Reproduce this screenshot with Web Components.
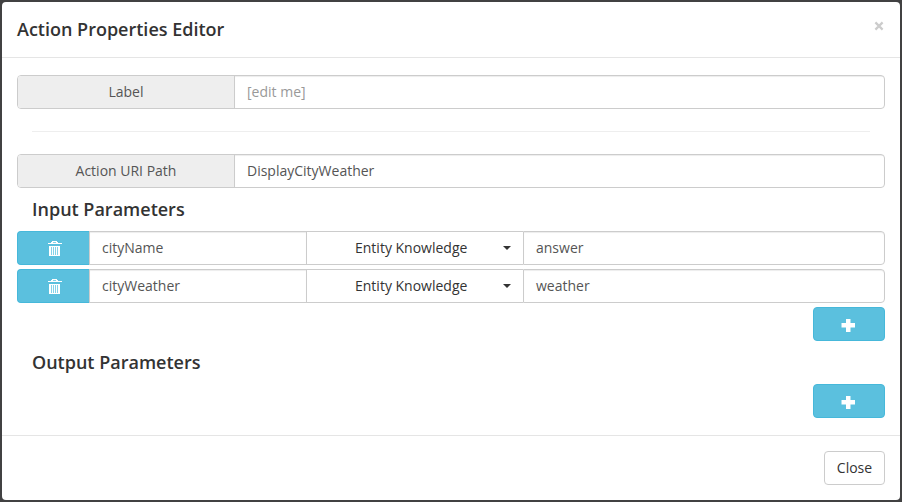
<!DOCTYPE html>
<html lang="en">
<head>
<meta charset="utf-8">
<title>Action Properties Editor</title>
<style>
html, body { margin: 0; height: 100%; }
body { box-sizing: border-box; padding: 2px; background: #414142; overflow: hidden; font: 14px/20px "Open Sans", "Noto Sans", sans-serif; color: #333; }
</style>
</head>
<body>
<modal-dialog heading="Action Properties Editor">
  <field-row label="Label" placeholder="[edit me]"></field-row>
  <rule-line></rule-line>
  <field-row label="Action URI Path" value="DisplayCityWeather"></field-row>
  <section-title>Input Parameters</section-title>
  <param-row name="cityName" kind="Entity Knowledge" value="answer"></param-row>
  <param-row name="cityWeather" kind="Entity Knowledge" value="weather"></param-row>
  <add-button></add-button>
  <section-title>Output Parameters</section-title>
  <add-button></add-button>
  <close-button slot="footer">Close</close-button>
</modal-dialog>
<script>
const define = (tag, render) => customElements.define(tag, class extends HTMLElement {
  connectedCallback() {
    if (this.shadowRoot) return;
    const t = document.createElement('template');
    t.innerHTML = '<style>*{box-sizing:border-box}:host{box-sizing:border-box}</style>' + render(this);
    this.attachShadow({ mode: 'open' }).append(t.content.cloneNode(true));
  }
});
const at = (el, n) => el.getAttribute(n) || '';

define('modal-dialog', el => `<style>
:host{display:flex;flex-direction:column;height:498px;background:#fff;border-radius:4px;overflow:hidden}
header{display:flex;justify-content:space-between;height:56px;padding:15px;border-bottom:1px solid #e5e5e5}
h4{margin:0;font-size:18px;line-height:25px;font-weight:600;color:#333}
.x{width:12px;height:17px;display:flex;align-items:center;justify-content:center}
main{display:flex;flex-direction:column;height:377px;padding:17px 15px 0}
footer{display:flex;justify-content:flex-end;height:65px;padding:15px;border-top:1px solid #e5e5e5}
</style>
<header><h4>${at(el, 'heading')}</h4><span class="x"><svg width="10" height="10" viewBox="0 0 10 10"><path d="M1.4 1.4 8.6 8.6M8.6 1.4 1.4 8.6" stroke="#ccc" stroke-width="2.2"/></svg></span></header>
<main><slot></slot></main><footer><slot name="footer"></slot></footer>`);

define('field-row', el => `<style>
:host{display:flex;height:34px;flex:none;border:1px solid #ccc;border-radius:4px;overflow:hidden}
.l{width:217px;background:#eee;border-right:1px solid #ccc;text-align:center;color:#555;line-height:32px}
.v{flex:1;padding:0 12px;line-height:32px;color:#555;box-shadow:inset 0 1px 1px rgba(0,0,0,.075)}
.p{color:#999}
</style><span class="l">${at(el, 'label')}</span><span class="v${at(el, 'value') ? '' : ' p'}">${at(el, 'value') || at(el, 'placeholder')}</span>`);

define('rule-line', () => `<style>:host{display:block;flex:none;height:1px;background:#eee;margin:22px 15px}</style>`);

define('section-title', () => `<style>
:host{display:block;flex:none;height:43px;padding:9px 15px 0;font-size:18px;line-height:25px;font-weight:600;color:#333}
</style><slot></slot>`);

define('param-row', el => `<style>
:host{display:flex;flex:none;height:34px;margin-bottom:4px;line-height:32px;color:#555}
.b{width:72px;background:#5bc0de;border:1px solid #46b8da;border-right:0;border-radius:4px 0 0 4px;display:flex;align-items:center;justify-content:center;padding:2px 0 0 2px}
.f{border:1px solid #ccc;padding:0 12px;box-shadow:inset 0 1px 1px rgba(0,0,0,.075)}
.n{width:217px;border-right:0}
.k{width:217px;border:1px solid #ccc;border-right:0;color:#333;display:flex;align-items:center;padding:0 12px 0 48px;justify-content:space-between}
.v{flex:1;border-radius:0 4px 4px 0}
.c{border:4px solid transparent;border-top-color:#333;border-bottom:0}
</style>
<span class="b"><svg width="15" height="16" viewBox="0 0 15 16" fill="#fff" shape-rendering="crispEdges"><path d="M5 0h5v1h1v1h4v1H1V2h3V1h1z"/><path d="M6 1h3v1H6z" fill="#84d3e9"/><path d="M2 5h11v10H2z"/><path d="M4 6h1v8H4zM6 6h1v8H6zM8 6h1v8H8zM10 6h1v8h-1z" fill="#84d3e9"/></svg></span>
<span class="f n">${at(el, 'name')}</span><span class="k"><span>${at(el, 'kind')}</span><i class="c"></i></span><span class="f v">${at(el, 'value')}</span>`);

define('add-button', () => `<style>
:host{display:flex;flex:none;align-self:flex-end;align-items:center;justify-content:center;width:72px;height:34px;background:#5bc0de;border:1px solid #46b8da;border-radius:4px}
svg{margin:3px 2px 0 0}
</style><svg width="14" height="13" viewBox="0 0 14 13"><path d="M5 0h4.5v4H14v4.4H9.5V13H5V8.4H.5V4H5z" fill="#fff"/></svg>`);

define('close-button', () => `<style>
:host{display:flex;justify-content:center;width:61px;height:34px;border:1px solid #ccc;border-radius:4px;background:#fff;color:#333;line-height:32px}
</style><slot></slot>`);
</script>
</body>
</html>
